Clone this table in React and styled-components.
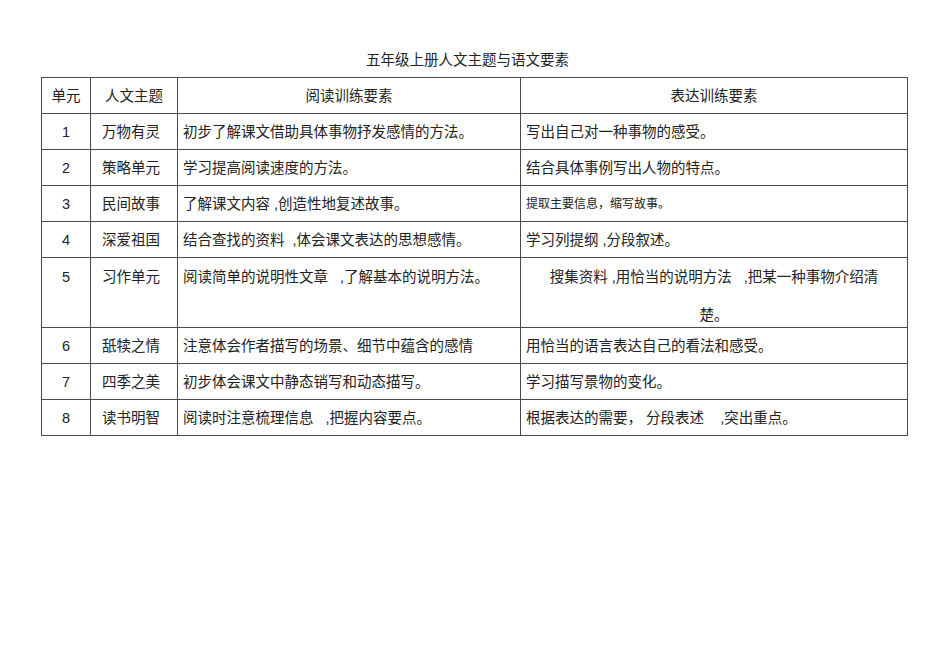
import React from 'react';
import styled, { createGlobalStyle } from 'styled-components';

const GlobalStyle = createGlobalStyle`
  html, body {
    margin: 0;
    padding: 0;
    background: #ffffff;
  }
  body {
    font-family: "Liberation Sans", "Noto Sans CJK SC", sans-serif;
    color: #222;
  }
`;

const Page = styled.div`
  width: 950px;
  height: 672px;
  padding-top: 50px;
  box-sizing: border-box;
  background: #fff;
`;

const Title = styled.h1`
  margin: 0 0 7px 41px;
  width: 866px;
  padding-right: 13px;
  box-sizing: border-box;
  text-align: center;
  font-size: 14.5px;
  font-weight: 400;
  line-height: 20px;
  color: #222;
`;

const Table = styled.table`
  margin-left: 41px;
  width: 866px;
  border-collapse: collapse;
  table-layout: fixed;
  font-size: 14.5px;
  color: #222;
`;

const Row = styled.tr`
  height: ${({ $tall }) => ($tall ? '70px' : '36px')};
`;

const HeadCell = styled.th`
  border: 1px solid #4a4a4a;
  font-weight: 400;
  text-align: center;
  padding: 0;
  line-height: 32px;
`;

const Cell = styled.td`
  border: 1px solid #4a4a4a;
  padding: 0 ${({ $pad }) => $pad || 5}px;
  text-align: ${({ $center }) => ($center ? 'center' : 'left')};
  vertical-align: ${({ $top }) => ($top ? 'top' : 'middle')};
  font-size: ${({ $small }) => ($small ? '12px' : 'inherit')};
  line-height: 32px;
  white-space: pre;
`;

// tall row: lines sit 38px apart but the row itself stays 70px high
const Lines = styled.div`
  line-height: 38px;
  height: 69px;
`;

const rows = [
  ['1', '万物有灵', '初步了解课文借助具体事物抒发感情的方法。', '写出自己对一种事物的感受。'],
  ['2', '策略单元', '学习提高阅读速度的方法。', '结合具体事例写出人物的特点。'],
  ['3', '民间故事', '了解课文内容 ,创造性地复述故事。', '提取主要信息，缩写故事。', { small: true }],
  ['4', '深爱祖国', '结合查找的资料  ,体会课文表达的思想感情。', '学习列提纲 ,分段叙述。'],
  ['5', '习作单元', '阅读简单的说明性文章   ,了解基本的说明方法。', null, { tall: true }],
  ['6', '舐犊之情', '注意体会作者描写的场景、细节中蕴含的感情', '用恰当的语言表达自己的看法和感受。'],
  ['7', '四季之美', '初步体会课文中静态销写和动态描写。', '学习描写景物的变化。'],
  ['8', '读书明智', '阅读时注意梳理信息   ,把握内容要点。', '根据表达的需要， 分段表述    ,突出重点。'],
];

export default function App() {
  return (
    <>
      <GlobalStyle />
      <Page>
        <Title>五年级上册人文主题与语文要素</Title>
        <Table>
          <colgroup>
            <col style={{ width: 49 }} />
            <col style={{ width: 87 }} />
            <col style={{ width: 343 }} />
            <col style={{ width: 387 }} />
          </colgroup>
          <tbody>
            <Row>
              <HeadCell>单元</HeadCell>
              <HeadCell>人文主题</HeadCell>
              <HeadCell>阅读训练要素</HeadCell>
              <HeadCell>表达训练要素</HeadCell>
            </Row>
            {rows.map(([num, theme, read, write, opts = {}]) => (
              <Row key={num} $tall={opts.tall}>
                <Cell $center $top={opts.tall}>{opts.tall ? <Lines>{num}</Lines> : num}</Cell>
                <Cell $pad={11} $top={opts.tall}>{opts.tall ? <Lines>{theme}</Lines> : theme}</Cell>
                <Cell $top={opts.tall}>{opts.tall ? <Lines>{read}</Lines> : read}</Cell>
                {opts.tall ? (
                  <Cell $center $top>
                    <Lines>
                      {'搜集资料 ,用恰当的说明方法   ,把某一种事物介绍清'}
                      <br />
                      {'楚。'}
                    </Lines>
                  </Cell>
                ) : (
                  <Cell $small={opts.small}>{write}</Cell>
                )}
              </Row>
            ))}
          </tbody>
        </Table>
      </Page>
    </>
  );
}
